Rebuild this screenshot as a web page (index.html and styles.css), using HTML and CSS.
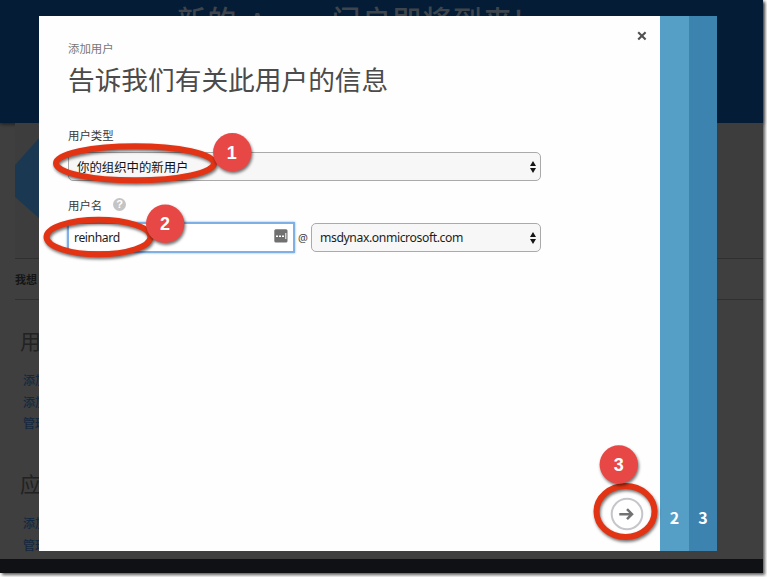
FILE: index.html
```html
<!DOCTYPE html>
<html lang="zh-CN">
<head>
<meta charset="utf-8">
<title>添加用户</title>
<link rel="stylesheet" href="styles.css">
</head>
<body>
<div class="window">
  <header class="banner"><span>新的</span><span class="brand">Azure</span><span>门户即将到来!</span></header>
  <main class="portal">
    <section class="intro">
      <svg class="hexagon" width="60" height="82" viewBox="0 0 60 82"><path d="M0 28L25 0H60V82H25L0 60Z" fill="#1b3852"/></svg>
    </section>
    <div class="tabs">我想</div>
    <section class="links">
      <h2>用户</h2>
      <a>添加用户</a>
      <a>添加组</a>
      <a>管理用户</a>
    </section>
    <section class="links apps">
      <h2>应用</h2>
      <a>添加应用</a>
      <a>管理</a>
    </section>
  </main>
  <footer class="bottom-bar"></footer>
</div>

<div class="dialog">
  <div class="panel">
    <svg class="close" width="10" height="10" viewBox="0 0 10 10"><path d="M1.2 1.2L8.6 8.6M8.6 1.2L1.2 8.6" stroke="#505050" stroke-width="2.1"/></svg>
    <p class="crumb">添加用户</p>
    <h1>告诉我们有关此用户的信息</h1>
    <div class="label">用户类型</div>
    <div class="select type"><span>你的组织中的新用户</span>
      <svg width="6" height="12" viewBox="0 0 6 12"><path d="M3 0L6 5H0ZM0 7H6L3 12Z" fill="#161616"/></svg>
    </div>
    <div class="label name">用户名 <i class="help">?</i></div>
    <div class="row">
      <div class="input"><span class="latin">reinhard</span>
        <svg width="14" height="14" viewBox="0 0 14 14"><rect x=".3" y=".3" width="13.2" height="13.2" rx="1.5" fill="#707070"/><path d="M2 7.2H4M5 7.2H7M8 7.2H10" stroke="#fff" stroke-width="1.6"/><path d="M11.8 4V10" stroke="#fff" stroke-width="1"/></svg>
      </div>
      <span class="at">@</span>
      <div class="select domain"><span class="latin">msdynax.onmicrosoft.com</span>
        <svg width="6" height="12" viewBox="0 0 6 12"><path d="M3 0L6 5H0ZM0 7H6L3 12Z" fill="#161616"/></svg>
      </div>
    </div>
    <svg class="next" width="34" height="34" viewBox="0 0 34 34"><circle cx="17" cy="17" r="15.3" fill="#fff" stroke="#c5c5ca" stroke-width="2"/><path d="M9.3 17.2H22M17 12.2L22 17.2L17 22.2" fill="none" stroke="#727272" stroke-width="2.5"/></svg>
  </div>
  <div class="step two">2</div>
  <div class="step three">3</div>
</div>

<svg class="marks" width="767" height="577" viewBox="0 0 767 577">
  <g fill="none" stroke="#e23414" stroke-width="6">
    <ellipse cx="135" cy="163.3" rx="79" ry="17"/>
    <ellipse cx="98.5" cy="237" rx="52" ry="17.3"/>
    <ellipse cx="625.5" cy="511.5" rx="29" ry="25.5"/>
  </g>
  <g class="badge">
    <circle cx="232.3" cy="152.3" r="19.2"/><circle cx="165.2" cy="223.8" r="19.2"/><circle cx="618.8" cy="464.5" r="19.2"/>
  </g>
  <g class="digits">
    <text x="231.8" y="158.5">1</text><text x="165" y="230.3">2</text><text x="618.8" y="471">3</text>
  </g>
</svg>
</body>
</html>
```
FILE: styles.css
```css
* { box-sizing: border-box; }
body {
  margin: 0;
  height: 577px;
  overflow: hidden;
  position: relative;
  background: #fff;
  color: #333;
  font-family: "Noto Sans CJK SC", sans-serif;
}
h1, h2, p { margin: 0; font-weight: 400; }
.window {
  width: 763px;
  height: 573px;
  display: flex;
  flex-direction: column;
  background: #3f3f3f;
  box-shadow: 2px 2px 3px rgba(0, 0, 0, .65);
}
.banner {
  display: flex;
  align-items: baseline;
  height: 123px;
  flex: none;
  padding: 3px 0 0 177px;
  background: #041c35;
  color: #3f454c;
  font-size: 29px;
  line-height: 32px;
  font-weight: 500;
  letter-spacing: 1.3px;
  white-space: nowrap;
  box-shadow: 0 1px 4px rgba(0, 0, 0, .6);
}
.brand { width: 94px; padding-left: 12px; font-size: 25px; letter-spacing: 0; }
.portal { flex: 1; padding-left: 15px; overflow: hidden; }
.intro { height: 135px; padding-top: 14px; background: #3d3d3d; }
.hexagon { display: block; }
.tabs {
  height: 42px;
  border-top: 1px solid #303030;
  border-bottom: 1px solid #303030;
  font-size: 11px;
  font-weight: 700;
  line-height: 40px;
  color: #151515;
}
.links { padding: 22px 0 0 5px; width: 80px; }
.links h2 { font-size: 21px; line-height: 36px; margin-bottom: 11px; color: #222; }
.links a { display: block; padding-left: 3px; font-size: 12px; line-height: 21.7px; color: #142840; font-weight: 500; }
.apps { padding-top: 31px; }
.bottom-bar { height: 14px; background: #0f1114; }

.dialog {
  position: absolute;
  left: 39px;
  top: 16px;
  width: 678px;
  height: 535px;
  display: grid;
  grid-template-columns: 621px 29px 28px;
}
.panel { position: relative; background: #fefefe; padding: 23px 0 0 29px; }
.close { position: absolute; right: 13px; top: 15px; }
.crumb { font-size: 11.4px; line-height: 18px; color: #777; }
h1 { font-size: 26.7px; line-height: 44px; color: #4b4b4b; }
.label { margin-top: 25px; font-size: 11.4px; line-height: 18px; color: #383838; }
.label.name { margin-top: 15px; display: flex; gap: 11px; align-items: center; }
.help {
  width: 13px;
  height: 13px;
  margin-top: -1px;
  border-radius: 50%;
  background: #c4c4c4;
  color: #fff;
  font: bold 11px/13px "Liberation Sans", sans-serif;
  text-align: center;
}
.select {
  display: flex;
  align-items: center;
  justify-content: space-between;
  height: 29px;
  padding: 0 4px 0 8px;
  border: 1px solid #aaa;
  border-radius: 5px;
  background: #f7f7f7;
  color: #111;
  font-size: 12.4px;
}
.type { width: 473px; margin-top: 8px; }
.row { width: 473px; display: flex; align-items: center; margin-top: 8px; }
.input {
  width: 228px;
  height: 31px;
  margin-left: -1px;
  border: 2px solid #7eb0e6;
  box-shadow: 0 0 2px #7eb0e6;
  padding: 0 5px;
  display: flex;
  align-items: center;
  justify-content: space-between;
  background: #fff;
}
.input svg { margin-top: -4px; }
.latin { font: 12.2px/18px "Noto Sans", sans-serif; letter-spacing: -.4px; color: #1c1c1c; padding-top: 1px; }
.at { width: 16px; text-align: center; font: 11px/16px "Noto Sans", sans-serif; color: #444; padding-top: 1px; }
.domain { width: 230px; }
.next { position: absolute; right: 16px; bottom: 20px; }
.step {
  display: flex;
  align-items: flex-end;
  justify-content: center;
  padding-bottom: 23px;
  color: #fff;
  font: bold 16px/22px "Noto Sans CJK SC", sans-serif;
}
.two { background: #559fc7; }
.three { background: #3d83af; }

.marks { position: absolute; left: 0; top: 0; }
.marks g { filter: drop-shadow(1px 2px 1.5px rgba(0, 0, 0, .55)); }
.badge { fill: #e84845; }
.marks .digits { filter: none; fill: #fff; font: bold 18px "Liberation Sans", sans-serif; text-anchor: middle; }
```
